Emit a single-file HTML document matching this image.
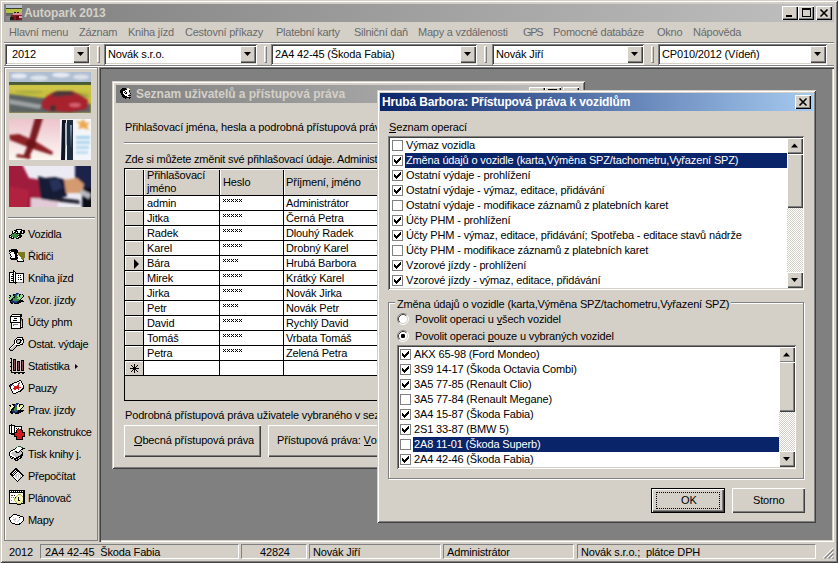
<!DOCTYPE html><html><head><meta charset="utf-8"><style>
html,body{margin:0;padding:0;width:838px;height:563px;overflow:hidden;background:#D4D0C8;position:relative}
.t{position:absolute;font-family:"Liberation Sans", sans-serif;font-size:11px;line-height:13px;letter-spacing:-0.15px;white-space:nowrap;color:#000}
.b{font-weight:bold}
u{text-decoration:none;border-bottom:1px solid currentColor;line-height:10px;display:inline-block}
svg{position:absolute;overflow:visible}
</style></head><body>
<div style="position:absolute;left:0px;top:0px;width:838px;height:563px;box-sizing:border-box;background:#D4D0C8;box-shadow:inset 1px 1px #D4D0C8,inset -1px -1px #404040,inset 2px 2px #fff,inset -2px -2px #808080;"></div>
<div style="position:absolute;left:4px;top:4px;width:830px;height:18px;background:linear-gradient(to right,#808080,#C0C0C0)"></div>
<div class="t b" style="left:24px;top:7px;color:#D4D0C8;font-size:12px;letter-spacing:-0.08px">Autopark 2013</div>
<svg style="left:6px;top:5px" width="16" height="16" shape-rendering="crispEdges"><rect width="16" height="16" fill="#6a6a6a"/><rect width="16" height="3" fill="#b8c0d0"/><rect y="3" width="16" height="1" fill="#34421e"/><rect y="4" width="16" height="4" fill="#b8c048"/><rect x="8" y="7" width="2" height="1" fill="#202010"/><rect x="11" y="7" width="2" height="1" fill="#301010"/><rect x="0" y="8" width="16" height="1" fill="#606058"/><rect x="7" y="8" width="9" height="2" fill="#d090a0"/><rect x="5" y="10" width="11" height="5" fill="#8a1a22"/><rect x="4" y="12" width="4" height="3" fill="#202020"/><rect x="10" y="11" width="3" height="4" fill="#5a0a10"/><rect x="0" y="11" width="4" height="5" fill="#8a8a8a"/><rect x="13" y="11" width="3" height="2" fill="#e0a0b0"/></svg>
<div style="position:absolute;left:782px;top:6px;width:16px;height:14px;box-sizing:border-box;background:#D4D0C8;box-shadow:inset 1px 1px #fff,inset -1px -1px #000,inset -2px -2px #808080;"></div>
<div style="position:absolute;left:798px;top:6px;width:16px;height:14px;box-sizing:border-box;background:#D4D0C8;box-shadow:inset 1px 1px #fff,inset -1px -1px #000,inset -2px -2px #808080;"></div>
<div style="position:absolute;left:816px;top:6px;width:16px;height:14px;box-sizing:border-box;background:#D4D0C8;box-shadow:inset 1px 1px #fff,inset -1px -1px #000,inset -2px -2px #808080;"></div>
<div style="position:absolute;left:786px;top:15px;width:6px;height:2px;background:#000"></div>
<div style="position:absolute;left:802px;top:8px;width:9px;height:9px;box-sizing:border-box;border:1px solid #000;border-top-width:2px"></div>
<svg style="left:816px;top:6px" width="16" height="14"><path d="M4.5 3.5 L11.5 10.5 M11.5 3.5 L4.5 10.5" stroke="#000" stroke-width="1.6"/></svg>
<div class="t" style="left:9px;top:26px;color:#6a6a6a;letter-spacing:-0.25px">Hlavní menu</div>
<div class="t" style="left:79px;top:26px;color:#6a6a6a;letter-spacing:-0.25px">Záznam</div>
<div class="t" style="left:128px;top:26px;color:#6a6a6a;letter-spacing:-0.25px">Kniha jízd</div>
<div class="t" style="left:185px;top:26px;color:#6a6a6a;letter-spacing:-0.25px">Cestovní příkazy</div>
<div class="t" style="left:276px;top:26px;color:#6a6a6a;letter-spacing:-0.25px">Platební karty</div>
<div class="t" style="left:354px;top:26px;color:#6a6a6a;letter-spacing:-0.25px">Silniční daň</div>
<div class="t" style="left:418px;top:26px;color:#6a6a6a;letter-spacing:-0.25px">Mapy a vzdálenosti</div>
<div class="t" style="left:523px;top:26px;color:#6a6a6a;letter-spacing:-1.3px">GPS</div>
<div class="t" style="left:553px;top:26px;color:#6a6a6a;letter-spacing:-0.25px">Pomocné databáze</div>
<div class="t" style="left:657px;top:26px;color:#6a6a6a;letter-spacing:-0.25px">Okno</div>
<div class="t" style="left:693px;top:26px;color:#6a6a6a;letter-spacing:-0.25px">Nápověda</div>
<div style="position:absolute;left:4px;top:42px;width:830px;height:1px;background:#808080"></div>
<div style="position:absolute;left:4px;top:43px;width:830px;height:1px;background:#fff"></div>
<div style="position:absolute;left:4px;top:65px;width:830px;height:1px;background:#808080"></div>
<div style="position:absolute;left:4px;top:66px;width:830px;height:1px;background:#fff"></div>
<div style="position:absolute;left:5px;top:44px;width:85px;height:21px;box-sizing:border-box;background:#fff;box-shadow:inset 1px 1px #808080,inset -1px -1px #fff,inset 2px 2px #404040,inset -2px -2px #D4D0C8;"></div>
<div class="t" style="left:12px;top:48px;">2012</div>
<div style="position:absolute;left:73px;top:46px;width:16px;height:17px;box-sizing:border-box;background:#D4D0C8;box-shadow:inset 1px 1px #fff,inset -1px -1px #404040,inset -2px -2px #808080;"></div>
<svg style="left:73px;top:46px" width="16" height="17"><path d="M4 6 H11 L7.5 10 Z" fill="#000"/></svg>
<div style="position:absolute;left:104px;top:44px;width:153px;height:21px;box-sizing:border-box;background:#fff;box-shadow:inset 1px 1px #808080,inset -1px -1px #fff,inset 2px 2px #404040,inset -2px -2px #D4D0C8;"></div>
<div class="t" style="left:108px;top:48px;">Novák s.r.o.</div>
<div style="position:absolute;left:240px;top:46px;width:16px;height:17px;box-sizing:border-box;background:#D4D0C8;box-shadow:inset 1px 1px #fff,inset -1px -1px #404040,inset -2px -2px #808080;"></div>
<svg style="left:240px;top:46px" width="16" height="17"><path d="M4 6 H11 L7.5 10 Z" fill="#000"/></svg>
<div style="position:absolute;left:271px;top:44px;width:206px;height:21px;box-sizing:border-box;background:#fff;box-shadow:inset 1px 1px #808080,inset -1px -1px #fff,inset 2px 2px #404040,inset -2px -2px #D4D0C8;"></div>
<div class="t" style="left:275px;top:48px;">2A4 42-45 (Škoda Fabia)</div>
<div style="position:absolute;left:460px;top:46px;width:16px;height:17px;box-sizing:border-box;background:#D4D0C8;box-shadow:inset 1px 1px #fff,inset -1px -1px #404040,inset -2px -2px #808080;"></div>
<svg style="left:460px;top:46px" width="16" height="17"><path d="M4 6 H11 L7.5 10 Z" fill="#000"/></svg>
<div style="position:absolute;left:492px;top:44px;width:152px;height:21px;box-sizing:border-box;background:#fff;box-shadow:inset 1px 1px #808080,inset -1px -1px #fff,inset 2px 2px #404040,inset -2px -2px #D4D0C8;"></div>
<div class="t" style="left:496px;top:48px;">Novák Jiří</div>
<div style="position:absolute;left:627px;top:46px;width:16px;height:17px;box-sizing:border-box;background:#D4D0C8;box-shadow:inset 1px 1px #fff,inset -1px -1px #404040,inset -2px -2px #808080;"></div>
<svg style="left:627px;top:46px" width="16" height="17"><path d="M4 6 H11 L7.5 10 Z" fill="#000"/></svg>
<div style="position:absolute;left:658px;top:44px;width:169px;height:21px;box-sizing:border-box;background:#fff;box-shadow:inset 1px 1px #808080,inset -1px -1px #fff,inset 2px 2px #404040,inset -2px -2px #D4D0C8;"></div>
<div class="t" style="left:662px;top:48px;">CP010/2012 (Vídeň)</div>
<div style="position:absolute;left:810px;top:46px;width:16px;height:17px;box-sizing:border-box;background:#D4D0C8;box-shadow:inset 1px 1px #fff,inset -1px -1px #404040,inset -2px -2px #808080;"></div>
<svg style="left:810px;top:46px" width="16" height="17"><path d="M4 6 H11 L7.5 10 Z" fill="#000"/></svg>
<div style="position:absolute;left:97px;top:46px;width:3px;height:17px;box-sizing:border-box;border-left:1px solid #fff;border-right:1px solid #808080;border-top:1px solid #fff;border-bottom:1px solid #808080"></div>
<div style="position:absolute;left:264px;top:46px;width:3px;height:17px;box-sizing:border-box;border-left:1px solid #fff;border-right:1px solid #808080;border-top:1px solid #fff;border-bottom:1px solid #808080"></div>
<div style="position:absolute;left:484px;top:46px;width:3px;height:17px;box-sizing:border-box;border-left:1px solid #fff;border-right:1px solid #808080;border-top:1px solid #fff;border-bottom:1px solid #808080"></div>
<div style="position:absolute;left:651px;top:46px;width:3px;height:17px;box-sizing:border-box;border-left:1px solid #fff;border-right:1px solid #808080;border-top:1px solid #fff;border-bottom:1px solid #808080"></div>
<div style="position:absolute;left:4px;top:67px;width:94px;height:474px;box-sizing:border-box;border:1px solid #808080;box-shadow:inset 1px 1px #fff"></div>
<svg style="left:9px;top:72px" width="82" height="41">
<defs><filter id="bl" x="-10%" y="-10%" width="120%" height="120%"><feGaussianBlur stdDeviation="1"/></filter><filter id="bl2"><feGaussianBlur stdDeviation="0.6"/></filter><clipPath id="c82"><rect width="82" height="41"/></clipPath></defs>
<g clip-path="url(#c82)">
<rect width="82" height="41" fill="#c8c040"/>
<rect y="-2" width="82" height="13" fill="#b0bed2"/>
<g filter="url(#bl)"><ellipse cx="10" cy="4" rx="8" ry="2.5" fill="#e8ecf4"/><ellipse cx="30" cy="6" rx="9" ry="2.5" fill="#dfe5ee"/><ellipse cx="52" cy="3" rx="9" ry="2.5" fill="#e8ecf4"/><ellipse cx="72" cy="5" rx="8" ry="2.5" fill="#dce2ea"/></g>
<rect y="10" width="82" height="3" fill="#4a5a38" filter="url(#bl2)"/>
<g filter="url(#bl)"><rect x="0" y="14" width="82" height="4" fill="#d0c848"/><ellipse cx="20" cy="20" rx="14" ry="2" fill="#b0b040"/><ellipse cx="70" cy="24" rx="10" ry="3" fill="#a0a840"/></g>
<path d="M0 22 L82 32 L82 41 L0 41Z" fill="#5c6464" filter="url(#bl)"/>
<path d="M0 27 L34 33 L30 37 L0 32Z" fill="#9ca0a2" filter="url(#bl)"/>
<g filter="url(#bl)">
<path d="M33 30 L38 24 L45 20 L63 19 L71 23 L79 28 L78 37 L62 40 L40 39 L33 36Z" fill="#a8202e"/>
<path d="M42 22 L48 19 L62 19 L66 23 L46 25Z" fill="#503438"/>
<ellipse cx="66" cy="33" rx="6" ry="2" fill="#d86070"/>
<ellipse cx="44" cy="36" rx="3" ry="3" fill="#403030"/>
</g></g>
</svg>
<svg style="left:9px;top:119px" width="82" height="41">
<g clip-path="url(#c82)">
<defs><linearGradient id="pg" x1="0" y1="0" x2="0" y2="1"><stop offset="0" stop-color="#eec4cc"/><stop offset="0.6" stop-color="#f6e4e4"/><stop offset="1" stop-color="#fcf8f0"/></linearGradient></defs>
<rect width="82" height="41" fill="url(#pg)"/>
<g filter="url(#bl)">
<path d="M26 -1 L34 -1 L30 12 L24 30 L19 40 L14 38 L18 28Z" fill="#7a1a20"/>
<path d="M0 16 L10 15 L26 22 L44 33 L43 36 L24 30 L1 21Z" fill="#8c2026"/>
<path d="M8 35 L22 37 L21 40 L7 38Z" fill="#842024"/>
<ellipse cx="22" cy="25" rx="5" ry="4" fill="#6a1418"/>
</g>
<rect x="51" y="0" width="15" height="41" fill="#f4f2f6"/>
<g filter="url(#bl2)">
<path d="M53 1 L57 1 L56 41 L52 41Z" fill="#101820"/>
<path d="M58 1 L64 1 L64 41 L58 41Z" fill="#1c2c3c"/>
<path d="M56 4 L58 4 L58 26 L56 26Z" fill="#b0b8c8"/>
<path d="M61 6 L63 6 L62 30Z" fill="#8090a8"/>
</g>
<rect x="66" y="0" width="16" height="41" fill="#f2f6fa"/>
<g filter="url(#bl)"><path d="M74 0 L77 4 L81 3 L78 7 L80 11 L74 9 L69 10 L71 6 L67 2 L72 3Z" fill="#f0a850"/>
<rect x="67" y="17" width="14" height="3" fill="#a8d0ea"/><rect x="67" y="22" width="14" height="3" fill="#b0d4ec"/><rect x="67" y="27" width="13" height="3" fill="#b8d8ee"/><rect x="67" y="32" width="12" height="3" fill="#c0dcf0"/></g>
</g>
</svg>
<svg style="left:9px;top:166px" width="82" height="41">
<g clip-path="url(#c82)">
<rect width="82" height="41" fill="#eceaf2"/>
<g filter="url(#bl)">
<path d="M-2 -2 L13 -2 L20 12 L32 14 L34 43 L-2 43Z" fill="#a01a3c"/>
<path d="M0 20 L20 24 L18 43 L0 43Z" fill="#b02040"/>
<path d="M22 32 L50 33 L48 43 L22 43Z" fill="#e2cad8"/>
<path d="M66 -2 L84 -2 L84 43 L73 43 L73 22 L66 12Z" fill="#1a2048"/>
<path d="M74 22 L84 22 L84 43 L74 43Z" fill="#101018"/>
<path d="M29 10 L36 12 L46 11 L57 14 L58 30 L44 35 L32 33 L30 20Z" fill="#141a34"/>
<path d="M40 14 L50 13 L54 22 L44 26Z" fill="#28305a"/>
<path d="M55 14 L68 12 L75 18 L73 27 L57 27Z" fill="#d49a70"/>
<path d="M44 31 L70 34 L71 38 L44 35Z" fill="#202030"/>
<path d="M72 23 L82 28 L80 33 L71 28Z" fill="#b8b8c0"/>
</g>
</g>
</svg>
<div style="position:absolute;left:8px;top:217px;width:87px;height:1px;background:#808080"></div>
<div style="position:absolute;left:8px;top:218px;width:87px;height:1px;background:#fff"></div>
<div class="t" style="left:28px;top:228px;letter-spacing:-0.3px">Vozidla</div>
<div class="t" style="left:28px;top:250px;letter-spacing:-0.3px">Řidiči</div>
<div class="t" style="left:28px;top:272px;letter-spacing:-0.3px">Kniha jízd</div>
<div class="t" style="left:28px;top:294px;letter-spacing:-0.3px">Vzor. jízdy</div>
<div class="t" style="left:28px;top:316px;letter-spacing:-0.3px">Účty phm</div>
<div class="t" style="left:28px;top:338px;letter-spacing:-0.3px">Ostat. výdaje</div>
<div class="t" style="left:28px;top:360px;letter-spacing:-0.3px">Statistika</div>
<div class="t" style="left:28px;top:382px;letter-spacing:-0.3px">Pauzy</div>
<div class="t" style="left:28px;top:404px;letter-spacing:-0.3px">Prav. jízdy</div>
<div class="t" style="left:28px;top:426px;letter-spacing:-0.3px">Rekonstrukce</div>
<div class="t" style="left:28px;top:448px;letter-spacing:-0.3px">Tisk knihy j.</div>
<div class="t" style="left:28px;top:470px;letter-spacing:-0.3px">Přepočítat</div>
<div class="t" style="left:28px;top:492px;letter-spacing:-0.3px">Plánovač</div>
<div class="t" style="left:28px;top:514px;letter-spacing:-0.3px">Mapy</div>
<svg style="left:74px;top:363px" width="5" height="7"><path d="M1 1 L4 3.5 L1 6Z" fill="#000"/></svg>
<svg style="left:8px;top:226px" width="18" height="18" shape-rendering="crispEdges"><path d="M8 3h6v1h-6zM6 4h3v1h-3zM13 4h4v1h-4zM4 5h1v1h-1zM7 5h3v1h-3zM12 5h2v1h-2zM15 5h2v1h-2zM4 6h1v1h-1zM6 6h2v1h-2zM9 6h1v1h-1zM12 6h2v1h-2zM15 6h2v1h-2zM4 7h2v1h-2zM8 7h8v1h-8zM3 8h1v1h-1zM11 8h2v1h-2zM1 9h2v1h-2zM10 9h4v1h-4zM1 10h1v1h-1zM3 10h1v1h-1zM9 10h1v1h-1zM12 10h2v1h-2zM1 11h3v1h-3zM5 11h1v1h-1zM10 11h3v1h-3zM3 12h3v1h-3zM8 12h3v1h-3z" fill="#000"/><path d="M9 4h4v1h-4zM5 5h2v1h-2zM10 5h2v1h-2zM14 5h1v1h-1zM5 6h1v1h-1zM8 6h1v1h-1zM10 6h2v1h-2zM14 6h1v1h-1zM2 10h1v1h-1zM10 10h1v1h-1zM4 11h1v1h-1zM9 11h1v1h-1z" fill="#fff"/><path d="M6 7h2v1h-2zM4 8h6v1h-6zM3 9h7v1h-7zM4 10h5v1h-5zM6 11h3v1h-3z" fill="#3a8a44"/><path d="M10 8h1v1h-1z" fill="#8cd88c"/><path d="M11 10h1v1h-1z" fill="#2a5a34"/></svg>
<svg style="left:8px;top:247px" width="18" height="18" shape-rendering="crispEdges"><path d="M3 2h6v1h-6zM1 3h9v1h-9zM1 4h1v1h-1zM3 4h7v1h-7zM2 5h1v1h-1zM6 5h4v1h-4zM1 6h1v1h-1zM6 6h3v1h-3zM2 7h1v1h-1zM7 7h2v1h-2zM2 8h1v1h-1zM7 8h3v1h-3zM3 9h1v1h-1zM7 9h2v1h-2zM2 10h1v1h-1zM7 10h3v1h-3zM2 11h8v1h-8zM3 12h6v1h-6zM9 13h1v1h-1zM15 13h1v1h-1zM9 14h7v1h-7z" fill="#000"/><path d="M2 4h1v1h-1zM3 5h3v1h-3zM2 6h4v1h-4zM3 7h4v1h-4zM3 8h4v1h-4zM10 8h1v1h-1zM4 9h3v1h-3zM10 9h2v1h-2zM3 10h4v1h-4zM10 10h3v1h-3zM10 11h3v1h-3zM10 12h4v1h-4zM10 13h5v1h-5z" fill="#fff"/><path d="M10 5h7v1h-7zM10 6h7v1h-7zM10 7h7v1h-7zM11 8h6v1h-6zM12 9h5v1h-5zM13 10h4v1h-4zM13 11h3v1h-3zM14 12h2v1h-2z" fill="#7a7a1e"/></svg>
<svg style="left:8px;top:268px" width="18" height="18" shape-rendering="crispEdges"><path d="M5 2h1v1h-1zM5 3h2v1h-2zM1 4h5v1h-5zM7 4h1v1h-1zM1 5h1v1h-1zM5 5h1v1h-1zM7 5h9v1h-9zM1 6h1v1h-1zM4 6h2v1h-2zM7 6h1v1h-1zM15 6h1v1h-1zM1 7h1v1h-1zM5 7h1v1h-1zM7 7h1v1h-1zM10 7h1v1h-1zM12 7h1v1h-1zM15 7h1v1h-1zM1 8h1v1h-1zM3 8h3v1h-3zM7 8h1v1h-1zM15 8h1v1h-1zM1 9h1v1h-1zM5 9h1v1h-1zM7 9h1v1h-1zM10 9h1v1h-1zM12 9h1v1h-1zM15 9h1v1h-1zM1 10h1v1h-1zM3 10h3v1h-3zM7 10h1v1h-1zM15 10h1v1h-1zM1 11h1v1h-1zM5 11h1v1h-1zM7 11h1v1h-1zM10 11h1v1h-1zM12 11h2v1h-2zM15 11h1v1h-1zM1 12h1v1h-1zM3 12h3v1h-3zM7 12h1v1h-1zM15 12h1v1h-1zM1 13h1v1h-1zM5 13h1v1h-1zM7 13h1v1h-1zM15 13h1v1h-1zM1 14h8v1h-8zM15 14h1v1h-1zM7 15h1v1h-1z" fill="#000"/><path d="M6 4h1v1h-1zM2 5h3v1h-3zM6 5h1v1h-1zM2 6h2v1h-2zM6 6h1v1h-1zM8 6h7v1h-7zM2 7h3v1h-3zM6 7h1v1h-1zM8 7h2v1h-2zM11 7h1v1h-1zM13 7h2v1h-2zM2 8h1v1h-1zM6 8h1v1h-1zM8 8h7v1h-7zM2 9h3v1h-3zM6 9h1v1h-1zM8 9h2v1h-2zM11 9h1v1h-1zM13 9h2v1h-2zM2 10h1v1h-1zM6 10h1v1h-1zM8 10h7v1h-7zM2 11h3v1h-3zM6 11h1v1h-1zM8 11h2v1h-2zM11 11h1v1h-1zM14 11h1v1h-1zM2 12h1v1h-1zM6 12h1v1h-1zM8 12h7v1h-7zM2 13h3v1h-3zM6 13h1v1h-1zM8 13h7v1h-7z" fill="#fff"/><path d="M9 14h6v1h-6z" fill="#808080"/></svg>
<svg style="left:8px;top:290px" width="18" height="18" shape-rendering="crispEdges"><path d="M8 3h2v1h-2zM7 4h1v1h-1zM6 5h1v1h-1zM4 10h1v1h-1zM3 11h3v1h-3zM9 11h1v1h-1zM4 12h5v1h-5z" fill="#1a2a6a"/><path d="M10 3h1v1h-1zM8 4h2v1h-2zM7 5h2v1h-2zM7 6h1v1h-1zM6 11h3v1h-3z" fill="#2a50a0"/><path d="M5 4h2v1h-2zM11 4h2v1h-2zM14 4h1v1h-1zM1 5h2v1h-2zM5 5h1v1h-1zM11 5h1v1h-1zM15 5h1v1h-1zM2 6h1v1h-1zM6 6h1v1h-1zM11 6h1v1h-1zM15 6h1v1h-1zM1 7h1v1h-1zM5 7h2v1h-2zM14 7h1v1h-1zM4 8h1v1h-1zM13 8h1v1h-1zM3 9h2v1h-2zM12 9h1v1h-1zM1 10h3v1h-3zM11 10h4v1h-4zM2 11h1v1h-1zM10 11h6v1h-6zM2 12h2v1h-2zM9 12h4v1h-4zM3 13h2v1h-2zM6 13h5v1h-5z" fill="#000"/><path d="M10 4h1v1h-1zM13 4h1v1h-1zM3 5h2v1h-2zM9 5h2v1h-2zM12 5h3v1h-3zM3 6h3v1h-3zM9 6h2v1h-2zM12 6h3v1h-3zM2 7h3v1h-3zM10 7h4v1h-4zM1 8h3v1h-3zM9 8h4v1h-4zM1 9h2v1h-2zM11 9h1v1h-1z" fill="#8cd88c"/><path d="M8 6h1v1h-1zM7 7h3v1h-3zM5 8h4v1h-4zM5 9h6v1h-6zM5 10h6v1h-6z" fill="#3a8a44"/></svg>
<svg style="left:8px;top:312px" width="18" height="18" shape-rendering="crispEdges"><path d="M4 2h10v1h-10zM3 3h1v1h-1zM12 3h2v1h-2zM2 4h12v1h-12zM2 5h1v1h-1zM12 5h1v1h-1zM2 6h1v1h-1zM6 6h3v1h-3zM12 6h2v1h-2zM2 7h1v1h-1zM12 7h1v1h-1zM14 7h1v1h-1zM2 8h1v1h-1zM5 8h4v1h-4zM12 8h1v1h-1zM14 8h1v1h-1zM2 9h1v1h-1zM12 9h1v1h-1zM14 9h1v1h-1zM2 10h11v1h-11zM14 10h1v1h-1zM3 11h1v1h-1zM12 11h1v1h-1zM14 11h1v1h-1zM3 12h1v1h-1zM12 12h1v1h-1zM14 12h1v1h-1zM3 13h1v1h-1zM12 13h1v1h-1zM14 13h1v1h-1zM3 14h1v1h-1zM12 14h1v1h-1zM14 14h1v1h-1zM3 15h1v1h-1zM12 15h3v1h-3zM3 16h10v1h-10z" fill="#000"/><path d="M4 3h8v1h-8zM3 5h9v1h-9zM3 6h3v1h-3zM9 6h3v1h-3zM3 7h9v1h-9zM3 8h2v1h-2zM9 8h3v1h-3zM3 9h9v1h-9zM4 11h8v1h-8zM4 12h1v1h-1zM10 12h2v1h-2zM4 13h1v1h-1zM6 13h6v1h-6zM4 14h8v1h-8zM13 14h1v1h-1zM4 15h8v1h-8z" fill="#fff"/><path d="M13 7h1v1h-1zM13 8h1v1h-1zM5 12h5v1h-5zM5 13h1v1h-1z" fill="#808080"/></svg>
<svg style="left:8px;top:334px" width="18" height="18" shape-rendering="crispEdges"><path d="M9 3h6v1h-6zM8 4h1v1h-1zM14 4h1v1h-1zM7 5h1v1h-1zM9 5h4v1h-4zM14 5h2v1h-2zM6 6h1v1h-1zM8 6h1v1h-1zM12 6h2v1h-2zM15 6h1v1h-1zM6 7h1v1h-1zM8 7h1v1h-1zM12 7h1v1h-1zM15 7h1v1h-1zM6 8h1v1h-1zM8 8h1v1h-1zM11 8h2v1h-2zM15 8h1v1h-1zM6 9h1v1h-1zM9 9h3v1h-3zM14 9h1v1h-1zM5 10h1v1h-1zM12 10h3v1h-3zM4 11h1v1h-1zM8 11h4v1h-4zM3 12h1v1h-1zM8 12h1v1h-1zM2 13h1v1h-1zM7 13h1v1h-1zM1 14h1v1h-1zM6 14h1v1h-1zM1 15h1v1h-1zM5 15h1v1h-1zM2 16h3v1h-3z" fill="#000"/><path d="M9 4h5v1h-5zM8 5h1v1h-1zM13 5h1v1h-1zM7 6h1v1h-1zM14 6h1v1h-1zM7 7h1v1h-1zM14 7h1v1h-1zM7 8h1v1h-1zM14 8h1v1h-1zM7 9h2v1h-2zM12 9h2v1h-2zM6 10h6v1h-6zM5 11h1v1h-1zM4 12h1v1h-1zM3 13h1v1h-1zM2 14h1v1h-1z" fill="#fff"/><path d="M9 6h1v1h-1zM2 15h1v1h-1z" fill="#808080"/><path d="M10 6h2v1h-2zM9 7h3v1h-3zM9 8h2v1h-2zM6 11h2v1h-2zM5 12h3v1h-3zM4 13h3v1h-3zM3 14h3v1h-3zM3 15h2v1h-2z" fill="#c4c4c4"/></svg>
<svg style="left:8px;top:356px" width="18" height="18" shape-rendering="crispEdges"><path d="M2 2h2v1h-2zM3 3h1v1h-1zM5 3h3v1h-3zM3 4h1v1h-1zM5 4h1v1h-1zM7 4h1v1h-1zM13 4h3v1h-3zM3 5h1v1h-1zM5 5h1v1h-1zM7 5h1v1h-1zM9 5h3v1h-3zM13 5h1v1h-1zM15 5h1v1h-1zM2 6h2v1h-2zM5 6h1v1h-1zM7 6h1v1h-1zM9 6h1v1h-1zM11 6h1v1h-1zM13 6h1v1h-1zM15 6h1v1h-1zM3 7h1v1h-1zM5 7h1v1h-1zM7 7h1v1h-1zM9 7h1v1h-1zM11 7h1v1h-1zM13 7h1v1h-1zM15 7h1v1h-1zM3 8h1v1h-1zM5 8h1v1h-1zM7 8h1v1h-1zM9 8h1v1h-1zM11 8h1v1h-1zM13 8h1v1h-1zM15 8h1v1h-1zM3 9h1v1h-1zM5 9h1v1h-1zM7 9h1v1h-1zM9 9h1v1h-1zM11 9h1v1h-1zM13 9h1v1h-1zM15 9h1v1h-1zM2 10h2v1h-2zM5 10h1v1h-1zM7 10h1v1h-1zM9 10h1v1h-1zM11 10h1v1h-1zM13 10h1v1h-1zM15 10h1v1h-1zM3 11h1v1h-1zM5 11h1v1h-1zM7 11h1v1h-1zM9 11h1v1h-1zM11 11h1v1h-1zM13 11h1v1h-1zM15 11h1v1h-1zM3 12h1v1h-1zM5 12h1v1h-1zM7 12h1v1h-1zM9 12h1v1h-1zM11 12h1v1h-1zM13 12h1v1h-1zM15 12h1v1h-1zM3 13h1v1h-1zM5 13h1v1h-1zM7 13h1v1h-1zM9 13h1v1h-1zM11 13h1v1h-1zM13 13h1v1h-1zM15 13h1v1h-1zM2 14h2v1h-2zM5 14h3v1h-3zM9 14h3v1h-3zM13 14h3v1h-3zM3 15h1v1h-1zM3 16h14v1h-14zM6 17h2v1h-2zM10 17h2v1h-2zM14 17h2v1h-2z" fill="#000"/><path d="M6 4h1v1h-1zM6 5h1v1h-1zM14 5h1v1h-1zM6 6h1v1h-1zM10 6h1v1h-1zM14 6h1v1h-1zM6 7h1v1h-1zM10 7h1v1h-1zM14 7h1v1h-1zM6 8h1v1h-1zM10 8h1v1h-1zM14 8h1v1h-1zM6 9h1v1h-1zM10 9h1v1h-1zM14 9h1v1h-1zM6 10h1v1h-1zM10 10h1v1h-1zM14 10h1v1h-1zM6 11h1v1h-1zM10 11h1v1h-1zM14 11h1v1h-1zM6 12h1v1h-1zM10 12h1v1h-1zM14 12h1v1h-1zM6 13h1v1h-1zM10 13h1v1h-1zM14 13h1v1h-1z" fill="#8a4a5a"/></svg>
<svg style="left:8px;top:378px" width="18" height="18" shape-rendering="crispEdges"><path d="M11 2h2v1h-2zM9 3h2v1h-2zM13 3h1v1h-1zM6 4h3v1h-3zM13 4h1v1h-1zM4 5h2v1h-2zM14 5h1v1h-1zM2 6h2v1h-2zM14 6h1v1h-1zM1 7h1v1h-1zM15 7h1v1h-1zM1 8h1v1h-1zM15 8h1v1h-1zM2 9h1v1h-1zM15 9h1v1h-1zM2 10h1v1h-1zM14 10h2v1h-2zM3 11h1v1h-1zM13 11h2v1h-2zM3 12h1v1h-1zM12 12h2v1h-2zM4 13h1v1h-1zM10 13h3v1h-3zM4 14h1v1h-1zM8 14h2v1h-2zM5 15h3v1h-3z" fill="#000"/><path d="M11 3h2v1h-2zM9 4h2v1h-2zM12 4h1v1h-1zM6 5h4v1h-4zM12 5h2v1h-2zM5 6h5v1h-5zM11 6h3v1h-3zM4 7h1v1h-1zM6 7h3v1h-3zM11 7h4v1h-4zM3 8h3v1h-3zM11 8h4v1h-4zM3 9h3v1h-3zM13 9h2v1h-2zM3 10h2v1h-2zM11 10h3v1h-3zM4 11h2v1h-2zM8 11h2v1h-2zM11 11h2v1h-2zM4 12h8v1h-8zM5 13h5v1h-5zM5 14h3v1h-3z" fill="#fff"/><path d="M11 4h1v1h-1zM11 5h1v1h-1z" fill="#808080"/><path d="M10 5h1v1h-1zM10 6h1v1h-1z" fill="#7a3030"/><path d="M4 6h1v1h-1zM2 7h2v1h-2zM2 8h1v1h-1z" fill="#1a2a6a"/><path d="M5 7h1v1h-1z" fill="#8a4a5a"/><path d="M9 7h2v1h-2zM6 8h5v1h-5zM6 9h7v1h-7zM5 10h6v1h-6zM6 11h2v1h-2zM10 11h1v1h-1z" fill="#d81818"/></svg>
<svg style="left:8px;top:400px" width="18" height="18" shape-rendering="crispEdges"><path d="M8 3h2v1h-2zM9 4h1v1h-1zM6 5h1v1h-1zM5 9h1v1h-1zM4 10h2v1h-2zM4 11h3v1h-3zM9 11h1v1h-1zM5 12h4v1h-4z" fill="#1a2a6a"/><path d="M10 3h1v1h-1zM7 4h2v1h-2zM7 5h2v1h-2zM7 6h2v1h-2zM8 10h2v1h-2zM7 11h2v1h-2z" fill="#2a50a0"/><path d="M4 4h3v1h-3zM11 4h4v1h-4zM1 5h2v1h-2zM5 5h1v1h-1zM11 5h1v1h-1zM15 5h1v1h-1zM2 6h1v1h-1zM6 6h1v1h-1zM11 6h1v1h-1zM15 6h1v1h-1zM5 7h2v1h-2zM14 7h1v1h-1zM4 8h2v1h-2zM13 8h1v1h-1zM3 9h2v1h-2zM12 9h1v1h-1zM3 10h1v1h-1zM10 10h6v1h-6zM2 11h2v1h-2zM10 11h5v1h-5zM2 12h3v1h-3zM9 12h4v1h-4zM3 13h2v1h-2zM7 13h4v1h-4z" fill="#000"/><path d="M10 4h1v1h-1z" fill="#fff"/><path d="M3 5h2v1h-2zM9 5h2v1h-2zM13 5h2v1h-2zM3 6h3v1h-3zM9 6h2v1h-2zM12 6h3v1h-3zM2 7h3v1h-3zM9 7h5v1h-5zM2 8h2v1h-2zM9 8h4v1h-4zM2 9h1v1h-1zM9 9h3v1h-3zM2 10h1v1h-1z" fill="#f4f4b8"/><path d="M12 5h1v1h-1zM1 7h1v1h-1zM1 8h1v1h-1zM1 9h1v1h-1zM1 10h1v1h-1z" fill="#b8b850"/><path d="M7 7h2v1h-2zM6 8h3v1h-3zM6 9h3v1h-3zM6 10h2v1h-2z" fill="#3a8a44"/></svg>
<svg style="left:8px;top:422px" width="18" height="18" shape-rendering="crispEdges"><path d="M3 2h1v1h-1zM1 3h6v1h-6zM1 4h1v1h-1zM3 4h1v1h-1zM6 4h8v1h-8zM1 5h1v1h-1zM3 5h1v1h-1zM6 5h1v1h-1zM13 5h1v1h-1zM1 6h1v1h-1zM3 6h1v1h-1zM6 6h1v1h-1zM8 6h1v1h-1zM10 6h1v1h-1zM13 6h1v1h-1zM1 7h1v1h-1zM3 7h1v1h-1zM6 7h1v1h-1zM9 7h1v1h-1zM12 7h2v1h-2zM1 8h1v1h-1zM3 8h1v1h-1zM6 8h1v1h-1zM8 8h1v1h-1zM13 8h2v1h-2zM1 9h1v1h-1zM3 9h1v1h-1zM6 9h1v1h-1zM8 9h1v1h-1zM14 9h1v1h-1zM1 10h1v1h-1zM3 10h1v1h-1zM6 10h3v1h-3zM14 10h3v1h-3zM1 11h6v1h-6zM16 11h1v1h-1zM3 12h4v1h-4zM16 12h1v1h-1zM6 13h1v1h-1zM16 13h1v1h-1zM6 14h3v1h-3zM14 14h3v1h-3zM8 15h1v1h-1zM14 15h1v1h-1zM8 16h1v1h-1zM14 16h1v1h-1zM8 17h7v1h-7z" fill="#000"/><path d="M2 4h1v1h-1zM4 4h2v1h-2zM2 5h1v1h-1zM4 5h2v1h-2zM7 5h6v1h-6zM2 6h1v1h-1zM4 6h2v1h-2zM7 6h1v1h-1zM9 6h1v1h-1zM11 6h2v1h-2zM2 7h1v1h-1zM4 7h2v1h-2zM7 7h2v1h-2zM2 8h1v1h-1zM4 8h2v1h-2zM7 8h1v1h-1zM2 9h1v1h-1zM4 9h2v1h-2zM7 9h1v1h-1zM2 10h1v1h-1zM4 10h2v1h-2z" fill="#fff"/><path d="M10 7h2v1h-2zM9 8h4v1h-4zM9 9h5v1h-5zM9 10h5v1h-5zM7 11h9v1h-9zM7 12h9v1h-9zM7 13h9v1h-9zM9 14h5v1h-5zM9 15h5v1h-5zM9 16h5v1h-5z" fill="#d81818"/></svg>
<svg style="left:8px;top:444px" width="18" height="18" shape-rendering="crispEdges"><path d="M10 2h3v1h-3zM8 3h1v1h-1zM13 3h2v1h-2z" fill="#2a5a34"/><path d="M9 3h4v1h-4zM8 4h6v1h-6zM7 5h6v1h-6zM5 6h7v1h-7zM3 7h3v1h-3zM9 7h2v1h-2zM2 8h2v1h-2zM2 9h1v1h-1zM2 10h2v1h-2zM2 11h3v1h-3zM4 12h3v1h-3zM3 13h1v1h-1zM6 13h2v1h-2zM11 13h1v1h-1z" fill="#fff"/><path d="M7 4h1v1h-1zM14 4h3v1h-3zM5 5h2v1h-2zM13 5h2v1h-2zM3 6h2v1h-2zM12 6h1v1h-1zM2 7h1v1h-1zM7 7h2v1h-2zM11 7h1v1h-1zM13 7h1v1h-1zM1 8h1v1h-1zM8 8h3v1h-3zM14 8h1v1h-1zM1 9h1v1h-1zM14 9h1v1h-1zM1 10h1v1h-1zM13 10h2v1h-2zM1 11h1v1h-1zM12 11h3v1h-3zM2 12h2v1h-2zM10 12h4v1h-4zM2 13h1v1h-1zM4 13h2v1h-2zM8 13h3v1h-3zM12 13h2v1h-2zM3 14h2v1h-2zM6 14h4v1h-4zM11 14h2v1h-2zM6 15h2v1h-2zM9 15h2v1h-2zM7 16h3v1h-3z" fill="#000"/><path d="M6 7h1v1h-1zM12 7h1v1h-1zM4 8h4v1h-4zM11 8h3v1h-3zM3 9h11v1h-11zM4 10h9v1h-9zM5 11h7v1h-7zM7 12h3v1h-3z" fill="#c4c4c4"/></svg>
<svg style="left:8px;top:466px" width="18" height="18" shape-rendering="crispEdges"><path d="M7 2h2v1h-2zM6 3h4v1h-4zM5 4h2v1h-2zM8 4h3v1h-3zM4 5h2v1h-2zM7 5h1v1h-1zM9 5h3v1h-3zM3 6h2v1h-2zM6 6h1v1h-1zM8 6h1v1h-1zM11 6h2v1h-2zM2 7h2v1h-2zM5 7h1v1h-1zM7 7h1v1h-1zM12 7h2v1h-2zM2 8h3v1h-3zM6 8h1v1h-1zM13 8h2v1h-2zM3 9h3v1h-3zM14 9h2v1h-2zM4 10h1v1h-1zM14 10h1v1h-1zM5 11h1v1h-1zM13 11h1v1h-1zM6 12h1v1h-1zM12 12h1v1h-1zM7 13h1v1h-1zM11 13h1v1h-1zM8 14h1v1h-1zM10 14h1v1h-1zM9 15h1v1h-1z" fill="#000"/><path d="M7 4h1v1h-1zM6 5h1v1h-1zM8 5h1v1h-1zM5 6h1v1h-1zM7 6h1v1h-1zM9 6h2v1h-2zM4 7h1v1h-1zM6 7h1v1h-1zM8 7h2v1h-2zM11 7h1v1h-1zM5 8h1v1h-1zM7 8h1v1h-1zM10 8h1v1h-1zM12 8h1v1h-1zM6 9h1v1h-1zM9 9h1v1h-1zM11 9h1v1h-1zM13 9h1v1h-1zM5 10h2v1h-2zM9 10h1v1h-1zM11 10h1v1h-1zM13 10h1v1h-1zM6 11h2v1h-2zM9 11h1v1h-1zM11 11h1v1h-1zM7 12h2v1h-2zM10 12h1v1h-1zM8 13h2v1h-2zM9 14h1v1h-1z" fill="#fff"/><path d="M10 7h1v1h-1zM8 8h2v1h-2zM11 8h1v1h-1zM7 9h2v1h-2zM10 9h1v1h-1zM12 9h1v1h-1zM7 10h2v1h-2zM10 10h1v1h-1zM12 10h1v1h-1zM8 11h1v1h-1zM10 11h1v1h-1zM12 11h1v1h-1zM9 12h1v1h-1zM11 12h1v1h-1zM10 13h1v1h-1z" fill="#c4c4c4"/></svg>
<svg style="left:8px;top:488px" width="18" height="18" shape-rendering="crispEdges"><path d="M1 2h16v1h-16zM1 3h1v1h-1zM3 3h1v1h-1zM5 3h1v1h-1zM7 3h1v1h-1zM9 3h1v1h-1zM11 3h1v1h-1zM13 3h1v1h-1zM15 3h2v1h-2zM1 4h16v1h-16zM1 5h1v1h-1zM15 5h2v1h-2zM1 6h1v1h-1zM15 6h2v1h-2zM1 7h1v1h-1zM6 7h1v1h-1zM15 7h2v1h-2zM1 8h1v1h-1zM15 8h2v1h-2zM1 9h1v1h-1zM7 9h1v1h-1zM10 9h1v1h-1zM15 9h2v1h-2zM1 10h1v1h-1zM10 10h1v1h-1zM15 10h2v1h-2zM1 11h1v1h-1zM10 11h1v1h-1zM15 11h2v1h-2zM1 12h1v1h-1zM10 12h2v1h-2zM15 12h2v1h-2zM1 13h1v1h-1zM15 13h2v1h-2zM1 14h1v1h-1zM15 14h2v1h-2zM1 15h8v1h-8zM13 15h4v1h-4zM9 16h4v1h-4z" fill="#000"/><path d="M2 3h1v1h-1zM4 3h1v1h-1zM6 3h1v1h-1zM8 3h1v1h-1zM10 3h1v1h-1zM12 3h1v1h-1zM14 3h1v1h-1zM2 5h13v1h-13zM2 6h8v1h-8zM13 6h2v1h-2zM2 7h1v1h-1zM5 7h1v1h-1zM7 7h2v1h-2zM14 7h1v1h-1zM2 8h6v1h-6zM2 9h1v1h-1zM4 9h1v1h-1zM6 9h1v1h-1zM2 10h4v1h-4zM2 11h4v1h-4zM2 12h1v1h-1zM4 12h2v1h-2zM2 13h5v1h-5zM2 14h6v1h-6zM14 14h1v1h-1z" fill="#fff"/><path d="M10 6h3v1h-3zM9 7h1v1h-1zM13 7h1v1h-1zM8 8h1v1h-1zM14 8h1v1h-1zM6 10h2v1h-2zM6 11h1v1h-1zM6 12h1v1h-1zM7 13h1v1h-1zM14 13h1v1h-1zM8 14h1v1h-1zM13 14h1v1h-1zM9 15h4v1h-4z" fill="#b8b850"/><path d="M3 7h2v1h-2z" fill="#7a3030"/><path d="M10 7h3v1h-3zM9 8h5v1h-5zM8 9h2v1h-2zM11 9h4v1h-4zM8 10h2v1h-2zM11 10h4v1h-4zM7 11h3v1h-3zM11 11h4v1h-4zM7 12h3v1h-3zM12 12h3v1h-3zM8 13h6v1h-6zM9 14h4v1h-4z" fill="#f4f4b8"/><path d="M3 9h1v1h-1zM5 9h1v1h-1zM3 12h1v1h-1z" fill="#808080"/></svg>
<svg style="left:8px;top:510px" width="18" height="18" shape-rendering="crispEdges"><path d="M5 4h4v1h-4zM4 5h1v1h-1zM9 5h3v1h-3zM3 6h1v1h-1zM12 6h3v1h-3zM1 7h2v1h-2zM11 7h1v1h-1zM15 7h1v1h-1zM1 8h1v1h-1zM15 8h1v1h-1zM1 9h1v1h-1zM15 9h1v1h-1zM2 10h1v1h-1zM15 10h1v1h-1zM2 11h1v1h-1zM14 11h1v1h-1zM3 12h1v1h-1zM13 12h1v1h-1zM4 13h3v1h-3zM11 13h2v1h-2zM7 14h5v1h-5z" fill="#000"/><path d="M5 5h4v1h-4zM4 6h8v1h-8zM3 7h2v1h-2zM6 7h5v1h-5zM12 7h3v1h-3zM2 8h5v1h-5zM8 8h7v1h-7zM2 9h3v1h-3zM8 9h3v1h-3zM12 9h3v1h-3zM3 10h3v1h-3zM7 10h3v1h-3zM11 10h4v1h-4zM3 11h4v1h-4zM8 11h1v1h-1zM10 11h4v1h-4zM4 12h9v1h-9zM7 13h4v1h-4z" fill="#fff"/><path d="M5 7h1v1h-1zM7 8h1v1h-1zM5 9h3v1h-3zM11 9h1v1h-1zM6 10h1v1h-1zM10 10h1v1h-1zM7 11h1v1h-1zM9 11h1v1h-1z" fill="#c4c4c4"/></svg>
<div style="position:absolute;left:99px;top:67px;width:735px;height:475px;background:#808080;box-sizing:border-box;box-shadow:inset 1px 1px #808080,inset 2px 2px #404040,inset -1px -1px #fff,inset -2px -2px #D4D0C8"></div>
<div style="position:absolute;left:112px;top:81px;width:473px;height:388px;box-sizing:border-box;background:#D4D0C8;box-shadow:inset 1px 1px #D4D0C8,inset -1px -1px #404040,inset 2px 2px #fff,inset -2px -2px #808080;"></div>
<div style="position:absolute;left:116px;top:85px;width:465px;height:18px;background:linear-gradient(to right,#808080,#C0C0C0)"></div>
<svg style="left:120px;top:88px" width="13" height="12" shape-rendering="crispEdges"><path d="M2 0h4v1h-4zM1 1h6v1h-6zM0 2h5v1h-5zM0 3h3v1h-3zM5 3h1v1h-1zM0 4h3v1h-3zM4 4h1v1h-1zM6 4h1v1h-1zM1 5h2v1h-2zM5 5h2v1h-2zM1 6h3v1h-3zM2 7h3v1h-3zM8 7h3v1h-3zM2 8h5v1h-5zM3 9h8v1h-8zM5 10h1v1h-1zM9 10h1v1h-1zM9 2h1v2h-1zM10 5h1v1h-1z" fill="#000"/><path d="M7 1h3v1h-3zM5 2h4v1h-4zM3 3h2v1h-2zM6 3h3v1h-3zM3 4h1v1h-1zM5 4h1v1h-1zM7 4h2v1h-2zM3 5h2v1h-2zM7 5h3v1h-3zM4 6h5v1h-5zM5 7h3v1h-3zM7 8h2v1h-2z" fill="#fff"/><path d="M7 0h2v1h-2z" fill="#e8e8a0"/></svg>
<div class="t b" style="left:136px;top:88px;color:#D4D0C8;font-size:12px;letter-spacing:-0.03px">Seznam uživatelů a přístupová práva</div>
<div style="position:absolute;left:529px;top:87px;width:16px;height:14px;box-sizing:border-box;background:#D4D0C8;box-shadow:inset 1px 1px #fff,inset -1px -1px #000,inset -2px -2px #808080;"></div>
<div style="position:absolute;left:545px;top:87px;width:16px;height:14px;box-sizing:border-box;background:#D4D0C8;box-shadow:inset 1px 1px #fff,inset -1px -1px #000,inset -2px -2px #808080;"></div>
<div style="position:absolute;left:563px;top:87px;width:16px;height:14px;box-sizing:border-box;background:#D4D0C8;box-shadow:inset 1px 1px #fff,inset -1px -1px #000,inset -2px -2px #808080;"></div>
<div style="position:absolute;left:548px;top:89px;width:9px;height:2px;background:#000"></div>
<div class="t" style="left:125px;top:121px;">Přihlašovací jména, hesla a podrobná přístupová práva uživatelů</div>
<div style="position:absolute;left:124px;top:142px;width:460px;height:1px;background:#808080"></div>
<div style="position:absolute;left:124px;top:143px;width:460px;height:1px;background:#fff"></div>
<div class="t" style="left:125px;top:153px;letter-spacing:-0.22px">Zde si můžete změnit své přihlašovací údaje. Administrátor může</div>
<div style="position:absolute;left:124px;top:168px;width:260px;height:233px;background:#D4D0C8;box-sizing:border-box;border-left:1px solid #000;border-top:1px solid #000;border-bottom:1px solid #000"></div>
<div class="t" style="left:147px;top:169px;line-height:13px">Přihlašovací<br>jméno</div>
<div class="t" style="left:223px;top:176px;">Heslo</div>
<div class="t" style="left:286px;top:176px;">Příjmení, jméno</div>
<div style="position:absolute;left:144px;top:195px;width:240px;height:15px;background:#fff"></div>
<div class="t" style="left:147px;top:197px;">admin</div>
<svg style="left:0;top:0" width="838" height="563" shape-rendering="crispEdges"><path d="M223 199h1v1h-1zM225 199h1v1h-1zM224 200h1v1h-1zM223 201h1v1h-1zM225 201h1v1h-1zM227 199h1v1h-1zM229 199h1v1h-1zM228 200h1v1h-1zM227 201h1v1h-1zM229 201h1v1h-1zM231 199h1v1h-1zM233 199h1v1h-1zM232 200h1v1h-1zM231 201h1v1h-1zM233 201h1v1h-1zM235 199h1v1h-1zM237 199h1v1h-1zM236 200h1v1h-1zM235 201h1v1h-1zM237 201h1v1h-1zM239 199h1v1h-1zM241 199h1v1h-1zM240 200h1v1h-1zM239 201h1v1h-1zM241 201h1v1h-1z" fill="#000"/></svg>
<div class="t" style="left:286px;top:197px;">Administrátor</div>
<div style="position:absolute;left:144px;top:210px;width:240px;height:15px;background:#fff"></div>
<div class="t" style="left:147px;top:212px;">Jitka</div>
<svg style="left:0;top:0" width="838" height="563" shape-rendering="crispEdges"><path d="M223 214h1v1h-1zM225 214h1v1h-1zM224 215h1v1h-1zM223 216h1v1h-1zM225 216h1v1h-1zM227 214h1v1h-1zM229 214h1v1h-1zM228 215h1v1h-1zM227 216h1v1h-1zM229 216h1v1h-1zM231 214h1v1h-1zM233 214h1v1h-1zM232 215h1v1h-1zM231 216h1v1h-1zM233 216h1v1h-1zM235 214h1v1h-1zM237 214h1v1h-1zM236 215h1v1h-1zM235 216h1v1h-1zM237 216h1v1h-1zM239 214h1v1h-1zM241 214h1v1h-1zM240 215h1v1h-1zM239 216h1v1h-1zM241 216h1v1h-1z" fill="#000"/></svg>
<div class="t" style="left:286px;top:212px;">Černá Petra</div>
<div style="position:absolute;left:144px;top:225px;width:240px;height:15px;background:#fff"></div>
<div class="t" style="left:147px;top:227px;">Radek</div>
<svg style="left:0;top:0" width="838" height="563" shape-rendering="crispEdges"><path d="M223 229h1v1h-1zM225 229h1v1h-1zM224 230h1v1h-1zM223 231h1v1h-1zM225 231h1v1h-1zM227 229h1v1h-1zM229 229h1v1h-1zM228 230h1v1h-1zM227 231h1v1h-1zM229 231h1v1h-1zM231 229h1v1h-1zM233 229h1v1h-1zM232 230h1v1h-1zM231 231h1v1h-1zM233 231h1v1h-1zM235 229h1v1h-1zM237 229h1v1h-1zM236 230h1v1h-1zM235 231h1v1h-1zM237 231h1v1h-1zM239 229h1v1h-1zM241 229h1v1h-1zM240 230h1v1h-1zM239 231h1v1h-1zM241 231h1v1h-1z" fill="#000"/></svg>
<div class="t" style="left:286px;top:227px;">Dlouhý Radek</div>
<div style="position:absolute;left:144px;top:240px;width:240px;height:15px;background:#fff"></div>
<div class="t" style="left:147px;top:242px;">Karel</div>
<svg style="left:0;top:0" width="838" height="563" shape-rendering="crispEdges"><path d="M223 244h1v1h-1zM225 244h1v1h-1zM224 245h1v1h-1zM223 246h1v1h-1zM225 246h1v1h-1zM227 244h1v1h-1zM229 244h1v1h-1zM228 245h1v1h-1zM227 246h1v1h-1zM229 246h1v1h-1zM231 244h1v1h-1zM233 244h1v1h-1zM232 245h1v1h-1zM231 246h1v1h-1zM233 246h1v1h-1zM235 244h1v1h-1zM237 244h1v1h-1zM236 245h1v1h-1zM235 246h1v1h-1zM237 246h1v1h-1zM239 244h1v1h-1zM241 244h1v1h-1zM240 245h1v1h-1zM239 246h1v1h-1zM241 246h1v1h-1z" fill="#000"/></svg>
<div class="t" style="left:286px;top:242px;">Drobný Karel</div>
<div style="position:absolute;left:144px;top:255px;width:240px;height:15px;background:#fff"></div>
<div class="t" style="left:147px;top:257px;">Bára</div>
<svg style="left:0;top:0" width="838" height="563" shape-rendering="crispEdges"><path d="M223 259h1v1h-1zM225 259h1v1h-1zM224 260h1v1h-1zM223 261h1v1h-1zM225 261h1v1h-1zM227 259h1v1h-1zM229 259h1v1h-1zM228 260h1v1h-1zM227 261h1v1h-1zM229 261h1v1h-1zM231 259h1v1h-1zM233 259h1v1h-1zM232 260h1v1h-1zM231 261h1v1h-1zM233 261h1v1h-1zM235 259h1v1h-1zM237 259h1v1h-1zM236 260h1v1h-1zM235 261h1v1h-1zM237 261h1v1h-1z" fill="#000"/></svg>
<div class="t" style="left:286px;top:257px;">Hrubá Barbora</div>
<div style="position:absolute;left:144px;top:270px;width:240px;height:15px;background:#fff"></div>
<div class="t" style="left:147px;top:272px;">Mirek</div>
<svg style="left:0;top:0" width="838" height="563" shape-rendering="crispEdges"><path d="M223 274h1v1h-1zM225 274h1v1h-1zM224 275h1v1h-1zM223 276h1v1h-1zM225 276h1v1h-1zM227 274h1v1h-1zM229 274h1v1h-1zM228 275h1v1h-1zM227 276h1v1h-1zM229 276h1v1h-1zM231 274h1v1h-1zM233 274h1v1h-1zM232 275h1v1h-1zM231 276h1v1h-1zM233 276h1v1h-1zM235 274h1v1h-1zM237 274h1v1h-1zM236 275h1v1h-1zM235 276h1v1h-1zM237 276h1v1h-1zM239 274h1v1h-1zM241 274h1v1h-1zM240 275h1v1h-1zM239 276h1v1h-1zM241 276h1v1h-1z" fill="#000"/></svg>
<div class="t" style="left:286px;top:272px;">Krátký Karel</div>
<div style="position:absolute;left:144px;top:285px;width:240px;height:15px;background:#fff"></div>
<div class="t" style="left:147px;top:287px;">Jirka</div>
<svg style="left:0;top:0" width="838" height="563" shape-rendering="crispEdges"><path d="M223 289h1v1h-1zM225 289h1v1h-1zM224 290h1v1h-1zM223 291h1v1h-1zM225 291h1v1h-1zM227 289h1v1h-1zM229 289h1v1h-1zM228 290h1v1h-1zM227 291h1v1h-1zM229 291h1v1h-1zM231 289h1v1h-1zM233 289h1v1h-1zM232 290h1v1h-1zM231 291h1v1h-1zM233 291h1v1h-1zM235 289h1v1h-1zM237 289h1v1h-1zM236 290h1v1h-1zM235 291h1v1h-1zM237 291h1v1h-1zM239 289h1v1h-1zM241 289h1v1h-1zM240 290h1v1h-1zM239 291h1v1h-1zM241 291h1v1h-1z" fill="#000"/></svg>
<div class="t" style="left:286px;top:287px;">Novák Jirka</div>
<div style="position:absolute;left:144px;top:300px;width:240px;height:15px;background:#fff"></div>
<div class="t" style="left:147px;top:302px;">Petr</div>
<svg style="left:0;top:0" width="838" height="563" shape-rendering="crispEdges"><path d="M223 304h1v1h-1zM225 304h1v1h-1zM224 305h1v1h-1zM223 306h1v1h-1zM225 306h1v1h-1zM227 304h1v1h-1zM229 304h1v1h-1zM228 305h1v1h-1zM227 306h1v1h-1zM229 306h1v1h-1zM231 304h1v1h-1zM233 304h1v1h-1zM232 305h1v1h-1zM231 306h1v1h-1zM233 306h1v1h-1zM235 304h1v1h-1zM237 304h1v1h-1zM236 305h1v1h-1zM235 306h1v1h-1zM237 306h1v1h-1z" fill="#000"/></svg>
<div class="t" style="left:286px;top:302px;">Novák Petr</div>
<div style="position:absolute;left:144px;top:315px;width:240px;height:15px;background:#fff"></div>
<div class="t" style="left:147px;top:317px;">David</div>
<svg style="left:0;top:0" width="838" height="563" shape-rendering="crispEdges"><path d="M223 319h1v1h-1zM225 319h1v1h-1zM224 320h1v1h-1zM223 321h1v1h-1zM225 321h1v1h-1zM227 319h1v1h-1zM229 319h1v1h-1zM228 320h1v1h-1zM227 321h1v1h-1zM229 321h1v1h-1zM231 319h1v1h-1zM233 319h1v1h-1zM232 320h1v1h-1zM231 321h1v1h-1zM233 321h1v1h-1zM235 319h1v1h-1zM237 319h1v1h-1zM236 320h1v1h-1zM235 321h1v1h-1zM237 321h1v1h-1zM239 319h1v1h-1zM241 319h1v1h-1zM240 320h1v1h-1zM239 321h1v1h-1zM241 321h1v1h-1z" fill="#000"/></svg>
<div class="t" style="left:286px;top:317px;">Rychlý David</div>
<div style="position:absolute;left:144px;top:330px;width:240px;height:15px;background:#fff"></div>
<div class="t" style="left:147px;top:332px;">Tomáš</div>
<svg style="left:0;top:0" width="838" height="563" shape-rendering="crispEdges"><path d="M223 334h1v1h-1zM225 334h1v1h-1zM224 335h1v1h-1zM223 336h1v1h-1zM225 336h1v1h-1zM227 334h1v1h-1zM229 334h1v1h-1zM228 335h1v1h-1zM227 336h1v1h-1zM229 336h1v1h-1zM231 334h1v1h-1zM233 334h1v1h-1zM232 335h1v1h-1zM231 336h1v1h-1zM233 336h1v1h-1zM235 334h1v1h-1zM237 334h1v1h-1zM236 335h1v1h-1zM235 336h1v1h-1zM237 336h1v1h-1zM239 334h1v1h-1zM241 334h1v1h-1zM240 335h1v1h-1zM239 336h1v1h-1zM241 336h1v1h-1z" fill="#000"/></svg>
<div class="t" style="left:286px;top:332px;">Vrbata Tomáš</div>
<div style="position:absolute;left:144px;top:345px;width:240px;height:15px;background:#fff"></div>
<div class="t" style="left:147px;top:347px;">Petra</div>
<svg style="left:0;top:0" width="838" height="563" shape-rendering="crispEdges"><path d="M223 349h1v1h-1zM225 349h1v1h-1zM224 350h1v1h-1zM223 351h1v1h-1zM225 351h1v1h-1zM227 349h1v1h-1zM229 349h1v1h-1zM228 350h1v1h-1zM227 351h1v1h-1zM229 351h1v1h-1zM231 349h1v1h-1zM233 349h1v1h-1zM232 350h1v1h-1zM231 351h1v1h-1zM233 351h1v1h-1zM235 349h1v1h-1zM237 349h1v1h-1zM236 350h1v1h-1zM235 351h1v1h-1zM237 351h1v1h-1zM239 349h1v1h-1zM241 349h1v1h-1zM240 350h1v1h-1zM239 351h1v1h-1zM241 351h1v1h-1z" fill="#000"/></svg>
<div class="t" style="left:286px;top:347px;">Zelená Petra</div>
<div style="position:absolute;left:144px;top:360px;width:240px;height:15px;background:#fff"></div>
<div class="t" style="left:147px;top:362px;"></div>
<div class="t" style="left:286px;top:362px;"></div>
<div style="position:absolute;left:124px;top:195px;width:260px;height:1px;background:#000"></div>
<div style="position:absolute;left:124px;top:210px;width:260px;height:1px;background:#000"></div>
<div style="position:absolute;left:124px;top:225px;width:260px;height:1px;background:#000"></div>
<div style="position:absolute;left:124px;top:240px;width:260px;height:1px;background:#000"></div>
<div style="position:absolute;left:124px;top:255px;width:260px;height:1px;background:#000"></div>
<div style="position:absolute;left:124px;top:270px;width:260px;height:1px;background:#000"></div>
<div style="position:absolute;left:124px;top:285px;width:260px;height:1px;background:#000"></div>
<div style="position:absolute;left:124px;top:300px;width:260px;height:1px;background:#000"></div>
<div style="position:absolute;left:124px;top:315px;width:260px;height:1px;background:#000"></div>
<div style="position:absolute;left:124px;top:330px;width:260px;height:1px;background:#000"></div>
<div style="position:absolute;left:124px;top:345px;width:260px;height:1px;background:#000"></div>
<div style="position:absolute;left:124px;top:360px;width:260px;height:1px;background:#000"></div>
<div style="position:absolute;left:124px;top:375px;width:260px;height:1px;background:#000"></div>
<div style="position:absolute;left:143px;top:168px;width:1px;height:208px;background:#000"></div>
<div style="position:absolute;left:219px;top:168px;width:1px;height:208px;background:#000"></div>
<div style="position:absolute;left:283px;top:168px;width:1px;height:208px;background:#000"></div>
<div style="position:absolute;left:125px;top:169px;width:1px;height:26px;background:#fff"></div>
<div style="position:absolute;left:144px;top:169px;width:1px;height:26px;background:#fff"></div>
<div style="position:absolute;left:220px;top:169px;width:1px;height:26px;background:#fff"></div>
<div style="position:absolute;left:284px;top:169px;width:1px;height:26px;background:#fff"></div>
<div style="position:absolute;left:125px;top:169px;width:259px;height:1px;background:#fff"></div>
<div style="position:absolute;left:125px;top:196px;width:18px;height:1px;background:#fff"></div>
<div style="position:absolute;left:125px;top:196px;width:1px;height:14px;background:#fff"></div>
<div style="position:absolute;left:125px;top:211px;width:18px;height:1px;background:#fff"></div>
<div style="position:absolute;left:125px;top:211px;width:1px;height:14px;background:#fff"></div>
<div style="position:absolute;left:125px;top:226px;width:18px;height:1px;background:#fff"></div>
<div style="position:absolute;left:125px;top:226px;width:1px;height:14px;background:#fff"></div>
<div style="position:absolute;left:125px;top:241px;width:18px;height:1px;background:#fff"></div>
<div style="position:absolute;left:125px;top:241px;width:1px;height:14px;background:#fff"></div>
<div style="position:absolute;left:125px;top:256px;width:18px;height:1px;background:#fff"></div>
<div style="position:absolute;left:125px;top:256px;width:1px;height:14px;background:#fff"></div>
<div style="position:absolute;left:125px;top:271px;width:18px;height:1px;background:#fff"></div>
<div style="position:absolute;left:125px;top:271px;width:1px;height:14px;background:#fff"></div>
<div style="position:absolute;left:125px;top:286px;width:18px;height:1px;background:#fff"></div>
<div style="position:absolute;left:125px;top:286px;width:1px;height:14px;background:#fff"></div>
<div style="position:absolute;left:125px;top:301px;width:18px;height:1px;background:#fff"></div>
<div style="position:absolute;left:125px;top:301px;width:1px;height:14px;background:#fff"></div>
<div style="position:absolute;left:125px;top:316px;width:18px;height:1px;background:#fff"></div>
<div style="position:absolute;left:125px;top:316px;width:1px;height:14px;background:#fff"></div>
<div style="position:absolute;left:125px;top:331px;width:18px;height:1px;background:#fff"></div>
<div style="position:absolute;left:125px;top:331px;width:1px;height:14px;background:#fff"></div>
<div style="position:absolute;left:125px;top:346px;width:18px;height:1px;background:#fff"></div>
<div style="position:absolute;left:125px;top:346px;width:1px;height:14px;background:#fff"></div>
<div style="position:absolute;left:125px;top:361px;width:18px;height:1px;background:#fff"></div>
<div style="position:absolute;left:125px;top:361px;width:1px;height:14px;background:#fff"></div>
<svg style="left:133px;top:259px" width="8" height="10"><path d="M1 0 L6 5 L1 10Z" fill="#000"/></svg>
<svg style="left:129px;top:363px" width="11" height="11" shape-rendering="crispEdges"><path d="M5 1h1v9h-1zM1 5h9v1h-9zM2 2h1v1h-1zM3 3h1v1h-1zM8 2h1v1h-1zM7 3h1v1h-1zM2 8h1v1h-1zM3 7h1v1h-1zM8 8h1v1h-1zM7 7h1v1h-1zM4 4h3v3h-3z" fill="#000"/></svg>
<div class="t" style="left:125px;top:409px;">Podrobná přístupová práva uživatele vybraného v seznamu</div>
<div style="position:absolute;left:124px;top:425px;width:137px;height:32px;box-sizing:border-box;background:#D4D0C8;box-shadow:inset 1px 1px #fff,inset -1px -1px #404040,inset -2px -2px #808080;"></div>
<div class="t" style="left:134px;top:434px;"><u>O</u>becná přístupová práva</div>
<div style="position:absolute;left:268px;top:425px;width:140px;height:32px;box-sizing:border-box;background:#D4D0C8;box-shadow:inset 1px 1px #fff,inset -1px -1px #404040,inset -2px -2px #808080;"></div>
<div class="t" style="left:277px;top:434px;">Přístupová práva: <u>V</u>ozidla</div>
<div style="position:absolute;left:377px;top:90px;width:439px;height:433px;box-sizing:border-box;background:#D4D0C8;box-shadow:inset 1px 1px #D4D0C8,inset -1px -1px #404040,inset 2px 2px #fff,inset -2px -2px #808080;"></div>
<div style="position:absolute;left:380px;top:93px;width:433px;height:18px;background:linear-gradient(to right,#0A246A,#A6CAF0)"></div>
<div class="t b" style="left:382px;top:96px;color:#fff;font-size:12px;letter-spacing:-0.14px">Hrubá Barbora: Přístupová práva k vozidlům</div>
<div style="position:absolute;left:795px;top:95px;width:16px;height:14px;box-sizing:border-box;background:#D4D0C8;box-shadow:inset 1px 1px #fff,inset -1px -1px #000,inset -2px -2px #808080;"></div>
<svg style="left:795px;top:95px" width="16" height="14"><path d="M4.5 3.5 L11.5 10.5 M11.5 3.5 L4.5 10.5" stroke="#000" stroke-width="1.6"/></svg>
<div class="t" style="left:389px;top:121px;"><u>S</u>eznam operací</div>
<div style="position:absolute;left:388px;top:136px;width:416px;height:154px;box-sizing:border-box;background:#fff;box-shadow:inset 1px 1px #808080,inset -1px -1px #fff,inset 2px 2px #404040,inset -2px -2px #D4D0C8;"></div>
<div style="position:absolute;left:392px;top:140px;width:11px;height:11px;box-sizing:border-box;border:1px solid #808080;background:#fff"></div>
<div class="t" style="left:406px;top:139px;color:#000">Výmaz vozidla</div>
<div style="position:absolute;left:405px;top:153px;width:382px;height:15px;background:#0A246A"></div>
<div style="position:absolute;left:392px;top:155px;width:11px;height:11px;box-sizing:border-box;border:1px solid #808080;background:#fff"></div>
<svg style="left:394px;top:157px" width="7" height="7" shape-rendering="crispEdges"><path d="M6 0h1v1h-1zM5 1h1v1h-1zM6 1h1v1h-1zM0 2h1v1h-1zM4 2h1v1h-1zM5 2h1v1h-1zM6 2h1v1h-1zM0 3h1v1h-1zM1 3h1v1h-1zM3 3h1v1h-1zM4 3h1v1h-1zM5 3h1v1h-1zM0 4h1v1h-1zM1 4h1v1h-1zM2 4h1v1h-1zM3 4h1v1h-1zM4 4h1v1h-1zM1 5h1v1h-1zM2 5h1v1h-1zM3 5h1v1h-1zM2 6h1v1h-1z" fill="#000"/></svg>
<div class="t" style="left:406px;top:154px;color:#fff">Změna údajů o vozidle (karta,Výměna SPZ/tachometru,Vyřazení SPZ)</div>
<div style="position:absolute;left:392px;top:170px;width:11px;height:11px;box-sizing:border-box;border:1px solid #808080;background:#fff"></div>
<svg style="left:394px;top:172px" width="7" height="7" shape-rendering="crispEdges"><path d="M6 0h1v1h-1zM5 1h1v1h-1zM6 1h1v1h-1zM0 2h1v1h-1zM4 2h1v1h-1zM5 2h1v1h-1zM6 2h1v1h-1zM0 3h1v1h-1zM1 3h1v1h-1zM3 3h1v1h-1zM4 3h1v1h-1zM5 3h1v1h-1zM0 4h1v1h-1zM1 4h1v1h-1zM2 4h1v1h-1zM3 4h1v1h-1zM4 4h1v1h-1zM1 5h1v1h-1zM2 5h1v1h-1zM3 5h1v1h-1zM2 6h1v1h-1z" fill="#000"/></svg>
<div class="t" style="left:406px;top:169px;color:#000">Ostatní výdaje - prohlížení</div>
<div style="position:absolute;left:392px;top:185px;width:11px;height:11px;box-sizing:border-box;border:1px solid #808080;background:#fff"></div>
<svg style="left:394px;top:187px" width="7" height="7" shape-rendering="crispEdges"><path d="M6 0h1v1h-1zM5 1h1v1h-1zM6 1h1v1h-1zM0 2h1v1h-1zM4 2h1v1h-1zM5 2h1v1h-1zM6 2h1v1h-1zM0 3h1v1h-1zM1 3h1v1h-1zM3 3h1v1h-1zM4 3h1v1h-1zM5 3h1v1h-1zM0 4h1v1h-1zM1 4h1v1h-1zM2 4h1v1h-1zM3 4h1v1h-1zM4 4h1v1h-1zM1 5h1v1h-1zM2 5h1v1h-1zM3 5h1v1h-1zM2 6h1v1h-1z" fill="#000"/></svg>
<div class="t" style="left:406px;top:184px;color:#000">Ostatní výdaje - výmaz, editace, přidávání</div>
<div style="position:absolute;left:392px;top:200px;width:11px;height:11px;box-sizing:border-box;border:1px solid #808080;background:#fff"></div>
<div class="t" style="left:406px;top:199px;color:#000">Ostatní výdaje - modifikace záznamů z platebních karet</div>
<div style="position:absolute;left:392px;top:215px;width:11px;height:11px;box-sizing:border-box;border:1px solid #808080;background:#fff"></div>
<svg style="left:394px;top:217px" width="7" height="7" shape-rendering="crispEdges"><path d="M6 0h1v1h-1zM5 1h1v1h-1zM6 1h1v1h-1zM0 2h1v1h-1zM4 2h1v1h-1zM5 2h1v1h-1zM6 2h1v1h-1zM0 3h1v1h-1zM1 3h1v1h-1zM3 3h1v1h-1zM4 3h1v1h-1zM5 3h1v1h-1zM0 4h1v1h-1zM1 4h1v1h-1zM2 4h1v1h-1zM3 4h1v1h-1zM4 4h1v1h-1zM1 5h1v1h-1zM2 5h1v1h-1zM3 5h1v1h-1zM2 6h1v1h-1z" fill="#000"/></svg>
<div class="t" style="left:406px;top:214px;color:#000">Účty PHM - prohlížení</div>
<div style="position:absolute;left:392px;top:230px;width:11px;height:11px;box-sizing:border-box;border:1px solid #808080;background:#fff"></div>
<svg style="left:394px;top:232px" width="7" height="7" shape-rendering="crispEdges"><path d="M6 0h1v1h-1zM5 1h1v1h-1zM6 1h1v1h-1zM0 2h1v1h-1zM4 2h1v1h-1zM5 2h1v1h-1zM6 2h1v1h-1zM0 3h1v1h-1zM1 3h1v1h-1zM3 3h1v1h-1zM4 3h1v1h-1zM5 3h1v1h-1zM0 4h1v1h-1zM1 4h1v1h-1zM2 4h1v1h-1zM3 4h1v1h-1zM4 4h1v1h-1zM1 5h1v1h-1zM2 5h1v1h-1zM3 5h1v1h-1zM2 6h1v1h-1z" fill="#000"/></svg>
<div class="t" style="left:406px;top:229px;color:#000">Účty PHM - výmaz, editace, přidávání; Spotřeba - editace stavů nádrže</div>
<div style="position:absolute;left:392px;top:245px;width:11px;height:11px;box-sizing:border-box;border:1px solid #808080;background:#fff"></div>
<div class="t" style="left:406px;top:244px;color:#000">Účty PHM - modifikace záznamů z platebních karet</div>
<div style="position:absolute;left:392px;top:260px;width:11px;height:11px;box-sizing:border-box;border:1px solid #808080;background:#fff"></div>
<svg style="left:394px;top:262px" width="7" height="7" shape-rendering="crispEdges"><path d="M6 0h1v1h-1zM5 1h1v1h-1zM6 1h1v1h-1zM0 2h1v1h-1zM4 2h1v1h-1zM5 2h1v1h-1zM6 2h1v1h-1zM0 3h1v1h-1zM1 3h1v1h-1zM3 3h1v1h-1zM4 3h1v1h-1zM5 3h1v1h-1zM0 4h1v1h-1zM1 4h1v1h-1zM2 4h1v1h-1zM3 4h1v1h-1zM4 4h1v1h-1zM1 5h1v1h-1zM2 5h1v1h-1zM3 5h1v1h-1zM2 6h1v1h-1z" fill="#000"/></svg>
<div class="t" style="left:406px;top:259px;color:#000">Vzorové jízdy - prohlížení</div>
<div style="position:absolute;left:392px;top:275px;width:11px;height:11px;box-sizing:border-box;border:1px solid #808080;background:#fff"></div>
<svg style="left:394px;top:277px" width="7" height="7" shape-rendering="crispEdges"><path d="M6 0h1v1h-1zM5 1h1v1h-1zM6 1h1v1h-1zM0 2h1v1h-1zM4 2h1v1h-1zM5 2h1v1h-1zM6 2h1v1h-1zM0 3h1v1h-1zM1 3h1v1h-1zM3 3h1v1h-1zM4 3h1v1h-1zM5 3h1v1h-1zM0 4h1v1h-1zM1 4h1v1h-1zM2 4h1v1h-1zM3 4h1v1h-1zM4 4h1v1h-1zM1 5h1v1h-1zM2 5h1v1h-1zM3 5h1v1h-1zM2 6h1v1h-1z" fill="#000"/></svg>
<div class="t" style="left:406px;top:274px;color:#000">Vzorové jízdy - výmaz, editace, přidávání</div>
<div style="position:absolute;left:787px;top:138px;width:16px;height:150px;background-color:#fff;background-image:repeating-conic-gradient(#D4D0C8 0 25%,#fff 0 50%);background-size:2px 2px"></div>
<div style="position:absolute;left:787px;top:138px;width:16px;height:16px;box-sizing:border-box;background:#D4D0C8;box-shadow:inset 1px 1px #fff,inset -1px -1px #404040,inset -2px -2px #808080;"></div>
<svg style="left:787px;top:138px" width="16" height="16"><path d="M4 9.5 H11 L7.5 5.5Z" fill="#000"/></svg>
<div style="position:absolute;left:787px;top:272px;width:16px;height:16px;box-sizing:border-box;background:#D4D0C8;box-shadow:inset 1px 1px #fff,inset -1px -1px #404040,inset -2px -2px #808080;"></div>
<svg style="left:787px;top:272px" width="16" height="16"><path d="M4 6 H11 L7.5 10Z" fill="#000"/></svg>
<div style="position:absolute;left:787px;top:154px;width:16px;height:54px;box-sizing:border-box;background:#D4D0C8;box-shadow:inset 1px 1px #fff,inset -1px -1px #404040,inset -2px -2px #808080;"></div>
<div style="position:absolute;left:388px;top:302px;width:416px;height:177px;box-sizing:border-box;border:1px solid #808080;box-shadow:inset 1px 1px #fff,1px 1px #fff"></div>
<div style="position:absolute;left:395px;top:296px;width:336px;height:12px;background:#D4D0C8"></div>
<div class="t" style="left:397px;top:298px;">Změna údajů o vozidle (karta,Výměna SPZ/tachometru,Vyřazení SPZ)</div>
<svg style="left:397px;top:313px" width="12" height="12"><circle cx="6" cy="6" r="5" fill="#fff"/><path d="M2.11 9.89 A5.5 5.5 0 0 1 9.89 2.11" stroke="#808080" fill="none" stroke-width="1"/><path d="M9.89 2.11 A5.5 5.5 0 0 1 2.11 9.89" stroke="#fff" fill="none" stroke-width="1"/><path d="M2.82 9.18 A4.5 4.5 0 0 1 9.18 2.82" stroke="#404040" fill="none" stroke-width="1"/><path d="M9.18 2.82 A4.5 4.5 0 0 1 2.82 9.18" stroke="#D4D0C8" fill="none" stroke-width="1"/></svg>
<svg style="left:397px;top:330px" width="12" height="12"><circle cx="6" cy="6" r="5" fill="#fff"/><path d="M2.11 9.89 A5.5 5.5 0 0 1 9.89 2.11" stroke="#808080" fill="none" stroke-width="1"/><path d="M9.89 2.11 A5.5 5.5 0 0 1 2.11 9.89" stroke="#fff" fill="none" stroke-width="1"/><path d="M2.82 9.18 A4.5 4.5 0 0 1 9.18 2.82" stroke="#404040" fill="none" stroke-width="1"/><path d="M9.18 2.82 A4.5 4.5 0 0 1 2.82 9.18" stroke="#D4D0C8" fill="none" stroke-width="1"/><rect x="4" y="4" width="4" height="4" rx="1.2" fill="#000"/></svg>
<div class="t" style="left:415px;top:313px;">Povolit operaci u <u>v</u>šech vozidel</div>
<div class="t" style="left:415px;top:330px;">Povolit operaci <u>p</u>ouze u vybraných vozidel</div>
<div style="position:absolute;left:397px;top:345px;width:399px;height:124px;box-sizing:border-box;background:#fff;box-shadow:inset 1px 1px #808080,inset -1px -1px #fff,inset 2px 2px #404040,inset -2px -2px #D4D0C8;"></div>
<div style="position:absolute;left:400px;top:349px;width:11px;height:11px;box-sizing:border-box;border:1px solid #808080;background:#fff"></div>
<svg style="left:402px;top:351px" width="7" height="7" shape-rendering="crispEdges"><path d="M6 0h1v1h-1zM5 1h1v1h-1zM6 1h1v1h-1zM0 2h1v1h-1zM4 2h1v1h-1zM5 2h1v1h-1zM6 2h1v1h-1zM0 3h1v1h-1zM1 3h1v1h-1zM3 3h1v1h-1zM4 3h1v1h-1zM5 3h1v1h-1zM0 4h1v1h-1zM1 4h1v1h-1zM2 4h1v1h-1zM3 4h1v1h-1zM4 4h1v1h-1zM1 5h1v1h-1zM2 5h1v1h-1zM3 5h1v1h-1zM2 6h1v1h-1z" fill="#000"/></svg>
<div class="t" style="left:414px;top:348px;color:#000">AKX 65-98 (Ford Mondeo)</div>
<div style="position:absolute;left:400px;top:364px;width:11px;height:11px;box-sizing:border-box;border:1px solid #808080;background:#fff"></div>
<svg style="left:402px;top:366px" width="7" height="7" shape-rendering="crispEdges"><path d="M6 0h1v1h-1zM5 1h1v1h-1zM6 1h1v1h-1zM0 2h1v1h-1zM4 2h1v1h-1zM5 2h1v1h-1zM6 2h1v1h-1zM0 3h1v1h-1zM1 3h1v1h-1zM3 3h1v1h-1zM4 3h1v1h-1zM5 3h1v1h-1zM0 4h1v1h-1zM1 4h1v1h-1zM2 4h1v1h-1zM3 4h1v1h-1zM4 4h1v1h-1zM1 5h1v1h-1zM2 5h1v1h-1zM3 5h1v1h-1zM2 6h1v1h-1z" fill="#000"/></svg>
<div class="t" style="left:414px;top:363px;color:#000">3S9 14-17 (Škoda Octavia Combi)</div>
<div style="position:absolute;left:400px;top:379px;width:11px;height:11px;box-sizing:border-box;border:1px solid #808080;background:#fff"></div>
<svg style="left:402px;top:381px" width="7" height="7" shape-rendering="crispEdges"><path d="M6 0h1v1h-1zM5 1h1v1h-1zM6 1h1v1h-1zM0 2h1v1h-1zM4 2h1v1h-1zM5 2h1v1h-1zM6 2h1v1h-1zM0 3h1v1h-1zM1 3h1v1h-1zM3 3h1v1h-1zM4 3h1v1h-1zM5 3h1v1h-1zM0 4h1v1h-1zM1 4h1v1h-1zM2 4h1v1h-1zM3 4h1v1h-1zM4 4h1v1h-1zM1 5h1v1h-1zM2 5h1v1h-1zM3 5h1v1h-1zM2 6h1v1h-1z" fill="#000"/></svg>
<div class="t" style="left:414px;top:378px;color:#000">3A5 77-85 (Renault Clio)</div>
<div style="position:absolute;left:400px;top:394px;width:11px;height:11px;box-sizing:border-box;border:1px solid #808080;background:#fff"></div>
<div class="t" style="left:414px;top:393px;color:#000">3A5 77-84 (Renault Megane)</div>
<div style="position:absolute;left:400px;top:409px;width:11px;height:11px;box-sizing:border-box;border:1px solid #808080;background:#fff"></div>
<svg style="left:402px;top:411px" width="7" height="7" shape-rendering="crispEdges"><path d="M6 0h1v1h-1zM5 1h1v1h-1zM6 1h1v1h-1zM0 2h1v1h-1zM4 2h1v1h-1zM5 2h1v1h-1zM6 2h1v1h-1zM0 3h1v1h-1zM1 3h1v1h-1zM3 3h1v1h-1zM4 3h1v1h-1zM5 3h1v1h-1zM0 4h1v1h-1zM1 4h1v1h-1zM2 4h1v1h-1zM3 4h1v1h-1zM4 4h1v1h-1zM1 5h1v1h-1zM2 5h1v1h-1zM3 5h1v1h-1zM2 6h1v1h-1z" fill="#000"/></svg>
<div class="t" style="left:414px;top:408px;color:#000">3A4 15-87 (Škoda Fabia)</div>
<div style="position:absolute;left:400px;top:424px;width:11px;height:11px;box-sizing:border-box;border:1px solid #808080;background:#fff"></div>
<svg style="left:402px;top:426px" width="7" height="7" shape-rendering="crispEdges"><path d="M6 0h1v1h-1zM5 1h1v1h-1zM6 1h1v1h-1zM0 2h1v1h-1zM4 2h1v1h-1zM5 2h1v1h-1zM6 2h1v1h-1zM0 3h1v1h-1zM1 3h1v1h-1zM3 3h1v1h-1zM4 3h1v1h-1zM5 3h1v1h-1zM0 4h1v1h-1zM1 4h1v1h-1zM2 4h1v1h-1zM3 4h1v1h-1zM4 4h1v1h-1zM1 5h1v1h-1zM2 5h1v1h-1zM3 5h1v1h-1zM2 6h1v1h-1z" fill="#000"/></svg>
<div class="t" style="left:414px;top:423px;color:#000">2S1 33-87 (BMW 5)</div>
<div style="position:absolute;left:413px;top:437px;width:366px;height:15px;background:#0A246A"></div>
<div style="position:absolute;left:400px;top:439px;width:11px;height:11px;box-sizing:border-box;border:1px solid #808080;background:#fff"></div>
<div class="t" style="left:414px;top:438px;color:#fff">2A8 11-01 (Škoda Superb)</div>
<div style="position:absolute;left:400px;top:454px;width:11px;height:11px;box-sizing:border-box;border:1px solid #808080;background:#fff"></div>
<svg style="left:402px;top:456px" width="7" height="7" shape-rendering="crispEdges"><path d="M6 0h1v1h-1zM5 1h1v1h-1zM6 1h1v1h-1zM0 2h1v1h-1zM4 2h1v1h-1zM5 2h1v1h-1zM6 2h1v1h-1zM0 3h1v1h-1zM1 3h1v1h-1zM3 3h1v1h-1zM4 3h1v1h-1zM5 3h1v1h-1zM0 4h1v1h-1zM1 4h1v1h-1zM2 4h1v1h-1zM3 4h1v1h-1zM4 4h1v1h-1zM1 5h1v1h-1zM2 5h1v1h-1zM3 5h1v1h-1zM2 6h1v1h-1z" fill="#000"/></svg>
<div class="t" style="left:414px;top:453px;color:#000">2A4 42-46 (Škoda Fabia)</div>
<div style="position:absolute;left:779px;top:347px;width:16px;height:120px;background-color:#fff;background-image:repeating-conic-gradient(#D4D0C8 0 25%,#fff 0 50%);background-size:2px 2px"></div>
<div style="position:absolute;left:779px;top:347px;width:16px;height:16px;box-sizing:border-box;background:#D4D0C8;box-shadow:inset 1px 1px #fff,inset -1px -1px #404040,inset -2px -2px #808080;"></div>
<svg style="left:779px;top:347px" width="16" height="16"><path d="M4 9.5 H11 L7.5 5.5Z" fill="#000"/></svg>
<div style="position:absolute;left:779px;top:451px;width:16px;height:16px;box-sizing:border-box;background:#D4D0C8;box-shadow:inset 1px 1px #fff,inset -1px -1px #404040,inset -2px -2px #808080;"></div>
<svg style="left:779px;top:451px" width="16" height="16"><path d="M4 6 H11 L7.5 10Z" fill="#000"/></svg>
<div style="position:absolute;left:779px;top:362px;width:16px;height:50px;box-sizing:border-box;background:#D4D0C8;box-shadow:inset 1px 1px #fff,inset -1px -1px #404040,inset -2px -2px #808080;"></div>
<div style="position:absolute;left:651px;top:488px;width:74px;height:25px;background:#000"></div>
<div style="position:absolute;left:652px;top:489px;width:72px;height:23px;box-sizing:border-box;background:#D4D0C8;box-shadow:inset 1px 1px #fff,inset -1px -1px #404040,inset -2px -2px #808080;"></div>
<div style="position:absolute;left:656px;top:492px;width:64px;height:17px;box-sizing:border-box;border:1px dotted #000"></div>
<div class="t" style="left:681px;top:494px;">OK</div>
<div style="position:absolute;left:732px;top:488px;width:73px;height:25px;box-sizing:border-box;background:#D4D0C8;box-shadow:inset 1px 1px #fff,inset -1px -1px #404040,inset -2px -2px #808080;"></div>
<div class="t" style="left:753px;top:494px;">Storno</div>
<div class="t" style="left:9px;top:546px;">2012</div>
<div style="position:absolute;left:40px;top:544px;width:199px;height:15px;box-sizing:border-box;border:1px solid;border-color:#808080 #fff #fff #808080"></div>
<div class="t" style="left:45px;top:546px;">2A4 42-45&nbsp;&nbsp;Škoda Fabia</div>
<div style="position:absolute;left:241px;top:544px;width:66px;height:15px;box-sizing:border-box;border:1px solid;border-color:#808080 #fff #fff #808080"></div>
<div class="t" style="left:260px;top:546px;">42824</div>
<div style="position:absolute;left:309px;top:544px;width:132px;height:15px;box-sizing:border-box;border:1px solid;border-color:#808080 #fff #fff #808080"></div>
<div class="t" style="left:313px;top:546px;">Novák Jiří</div>
<div style="position:absolute;left:443px;top:544px;width:131px;height:15px;box-sizing:border-box;border:1px solid;border-color:#808080 #fff #fff #808080"></div>
<div class="t" style="left:447px;top:546px;">Administrátor</div>
<div style="position:absolute;left:577px;top:544px;width:239px;height:15px;box-sizing:border-box;border:1px solid;border-color:#808080 #fff #fff #808080"></div>
<div class="t" style="left:581px;top:546px;">Novák s.r.o.;&nbsp;&nbsp;plátce DPH</div>
<svg style="left:822px;top:547px" width="12" height="12"><path d="M11 1 L1 11 M11 2 L2 11 M11 5 L5 11 M11 6 L6 11 M11 9 L9 11 M11 10 L10 11" stroke="#fff" stroke-width="1"/></svg>
<svg style="left:822px;top:547px" width="12" height="12"><path d="M11.5 2.5 L2.5 11.5 M11.5 6.5 L6.5 11.5 M11.5 10.5 L10.5 11.5" stroke="#808080" stroke-width="1.4"/></svg>
</body></html>
